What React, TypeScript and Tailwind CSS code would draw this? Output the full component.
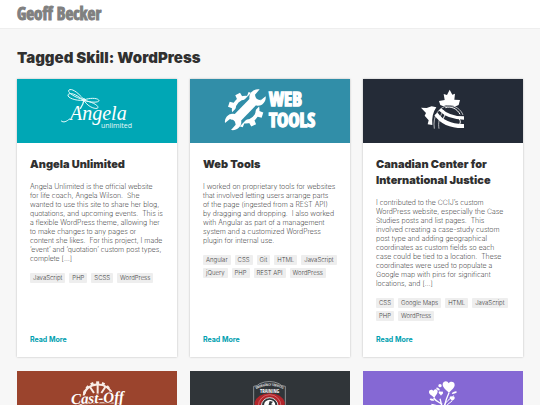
import type { ReactNode } from "react";

const narrow = "'Liberation Sans Narrow', 'Open Sans Condensed', 'DejaVu Sans Condensed', sans-serif";

function Banner({ className, label, children }: { className: string; label: string; children: ReactNode }) {
  return (
    <svg viewBox="0 0 160 64" role="img" aria-label={label} className={`block w-full ${className}`}>
      {children}
    </svg>
  );
}

function AngelaLogo() {
  return (
    <Banner className="bg-[#00a7b5]" label="Angela Unlimited">
      <g transform="translate(-7 -4) scale(.33333)" fill="none" stroke="#e6fafa" strokeWidth="3" strokeLinecap="round">
        <path d="M222 74C200 48 184 40 177 45s14 22 45 29z" />
        <path d="M220 76C196 54 176 52 174 60s22 18 46 16z" />
        <path d="M224 74c14-5 36-6 42 1s-20 10-42 1z" />
        <path d="M224 77c16 2 40 12 40 20s-28 2-40-18z" />
        <circle cx="222" cy="75" r="4" fill="#e6fafa" />
        <path d="M221 78c-1 10-6 16-10 22" strokeWidth="4" />
        <path d="M154 138c6 6 16 2 24-6" />
      </g>
      <text x="53" y="41" fill="#fff" fontSize="20" fontStyle="italic" fontFamily="'Liberation Serif', serif">
        Angela
      </text>
      <text x="84" y="49" fill="#e6fafa" fontSize="7" fontFamily="'Open Sans', sans-serif">
        unlimited
      </text>
    </Banner>
  );
}

function WebToolsLogo() {
  const teeth = [0, 45, 90, 135, 180, 225, 270, 315];
  return (
    <Banner className="bg-[#318ea8]" label="Web Tools">
      <g transform="translate(-5 -4) scale(.33333)">
        <circle cx="182" cy="104" r="36" fill="none" stroke="#fff" strokeWidth="11" />
        {teeth.map((a) => (
          <path key={a} d="M173 66l1-15h16l1 15z" fill="#fff" transform={`rotate(${a + 18} 182 104)`} />
        ))}
        <path d="M146 140L218 66" stroke="#318ea8" strokeWidth="46" />
        <path d="M148 138L214 70" stroke="#fff" strokeWidth="27" />
        <path
          d="M224 43c-16-3-31 9-31 24 0 14 12 26 26 25 14 0 25-13 23-28l-15 12-14-4-3-13z"
          fill="#fff"
        />
        <path
          d="M138 165c16 3 31-9 31-24 0-14-12-26-26-25-14 0-25 13-23 28l15-12 14 4 3 13z"
          fill="#fff"
        />
      </g>
      <g fill="#fff" stroke="#fff" strokeWidth="1.4" fontSize="19" fontWeight="700" fontFamily={narrow}>
        <text x="79" y="27">WEB</text>
        <text x="79" y="48">TOOLS</text>
      </g>
    </Banner>
  );
}

function JusticeLogo() {
  return (
    <Banner className="bg-[#242b37]" label="Canadian Center for International Justice">
      <g transform="translate(-5 -4) scale(.33333)">
        <path
          d="M275 44l8 15 8-3-2 18 17 1-4 15-12 5c-10-6-22-6-34-1l-9-4-4-12 17-3-3-18 10 3z"
          fill="#fff"
        />
        <path d="M189 98l17 1 15-5 14 3c-10 14-14 32-12 53l-14-2 3-12-12-14 4-8z" fill="#fff" />
        <g fill="none" stroke="#fff">
          <path d="M229 161c-6-38 14-66 42-69 22-1 38 12 44 28" strokeWidth="2" />
          <path d="M243 161c-3-16 0-34 14-55" strokeWidth="2" />
          <path d="M262 98c18-6 36 4 44 20M264 116c-8 10-10 20-10 26M304 132c4 6 4 12 0 16" strokeWidth="3" />
          <path d="M246 103c18 18 42 26 72 26" strokeWidth="10" />
          <path d="M234 117c18 26 46 37 84 36" strokeWidth="12" />
        </g>
      </g>
    </Banner>
  );
}

function CastOffLogo() {
  const spokes = [-72, -48, -24, 0, 24, 48, 72];
  return (
    <Banner className="bg-[#9b442d]" label="Cast-Off">
      <g transform="translate(-7 -46) scale(.33333)" fill="none" stroke="#f8ece6">
        <path d="M221 212a43 37 0 0 1 85-4" strokeWidth="6" />
        {spokes.map((a) => (
          <path key={a} d="M263 177v-8" strokeWidth="9" transform={`rotate(${a} 263 214)`} />
        ))}
        <path d="M263 176v34M240 186l12 18M286 186l-12 18" strokeWidth="6" />
        <path d="M190 242q72-14 145-6" strokeWidth="3" />
      </g>
      <text
        x="54"
        y="32"
        fill="#fff"
        stroke="#9b442d"
        strokeWidth="2"
        paintOrder="stroke"
        fontSize="15"
        fontWeight="700"
        fontStyle="italic"
        fontFamily="'Liberation Serif', serif"
        transform="rotate(-3 80 30)"
      >
        Cast-Off
      </text>
    </Banner>
  );
}

function TrainingLogo() {
  return (
    <Banner className="bg-[#303539]" label="Emergency Services Training">
      <g transform="translate(-5 -46) scale(.33333)">
        <path
          d="M206 184q12-1 18-8 29-13 58 0 6 7 19 8v100q-48 40-95 0z"
          fill="#303539"
          stroke="#b9bcbe"
          strokeWidth="2"
        />
        <path d="M209 232q8-25 45-27 37 2 45 27v60h-90z" fill="#b3242a" />
        <circle cx="254" cy="243" r="34" fill="none" stroke="#d98a8c" strokeWidth="2" />
        <circle cx="254" cy="243" r="25" fill="#303539" stroke="#d8dadb" strokeWidth="3" />
        <circle cx="254" cy="241" r="17" fill="#fff" />
        <path d="M250 252l-6-12 6 2 4-14 10 2-6 8 6 2-12 4z" fill="#303539" />
        <path id="training-arc" d="M212 193q42-22 84 0" fill="none" />
        <text fill="#e4e5e6" fontSize="10" fontWeight="700" fontFamily={narrow}>
          <textPath href="#training-arc" startOffset="50%" textAnchor="middle">
            EMERGENCY SERVICES
          </textPath>
        </text>
        <text x="254" y="203" textAnchor="middle" fill="#fff" fontSize="15" fontWeight="700" fontFamily={narrow}>
          TRAINING
        </text>
      </g>
    </Banner>
  );
}

function HeartTreeLogo() {
  return (
    <Banner className="bg-[#8568d4]" label="Tree of hearts">
      <g transform="translate(-5 -26) scale(.33333)" fill="#fff">
        <path d="M273 144c-8-10-20-16-19-27 2-10 15-11 18-2 6-8 18-5 18 5 0 9-10 14-17 24z" />
        <path d="M229 159c-6-8-17-11-16-19 1-7 10-8 13-2 3-8 13-7 13 1 0 7-6 12-10 20z" />
        <path d="M282 168c-3-5-8-6-7-11 2-4 7-4 8 0 3-4 8-2 7 3 0 4-5 5-8 8z" />
        <path d="M249 152c-3-5-8-6-7-10 1-4 6-4 7-1 3-3 7-1 6 3 0 3-4 4-6 8z" />
        <circle cx="246" cy="122" r="5" />
        <ellipse cx="240" cy="132" rx="6" ry="3" transform="rotate(35 240 132)" />
        <ellipse cx="289" cy="143" rx="8" ry="3" transform="rotate(-20 289 143)" />
        <ellipse cx="222" cy="164" rx="7" ry="3" transform="rotate(15 222 164)" />
        <g fill="none" stroke="#fff" strokeWidth="4">
          <path d="M251 225c2-30 2-46-5-64M257 225c0-40 4-56 16-82M253 178c-10-6-18-8-26-19" />
          <path d="M258 182c6-12 16-20 30-30M256 190c8-8 16-14 26-22M252 190c-10-8-20-10-32-12" strokeWidth="3" />
        </g>
      </g>
    </Banner>
  );
}

function Card({ logo, title, text, tags }: { logo: ReactNode; title: string; text: string; tags: string[] }) {
  return (
    <article className="flex flex-col bg-white shadow-[0_0_2px_rgba(0,0,0,0.25)]">
      {logo}
      <div className="flex grow flex-col pt-[13px] pr-3 pb-3 pl-[13px]">
        <h2 className="text-[11px] leading-[16px] font-black text-[#303030]">{title}</h2>
        <p className="mt-[10px] text-[7px] leading-[9px] font-extralight text-black">{text}</p>
        <ul className="mt-[10px] mb-[14px] flex flex-wrap gap-x-1 gap-y-[3px]">
          {tags.map((tag) => (
            <li key={tag} className="rounded-[1px] bg-[#eee] px-[3px] text-[6px] leading-[10px] font-light text-[#444]">
              {tag}
            </li>
          ))}
        </ul>
        <a href="#" className="mt-auto self-start text-[7px] leading-[10px] font-bold text-[#00a0af]">
          Read More
        </a>
      </div>
    </article>
  );
}

export default function App() {
  return (
    <div className="min-h-screen bg-[#f7f7f7] font-['Inter',sans-serif]">
      <header className="flex h-[29px] items-center border-b border-[#eee] bg-white px-[17px]">
        <a
          href="#"
          className="font-['Liberation_Sans_Narrow','Open_Sans_Condensed','DejaVu_Sans_Condensed',sans-serif] text-[17px] leading-[20px] font-bold text-[#808080] [-webkit-text-stroke:1px_#808080]"
        >
          Geoff Becker
        </a>
      </header>
      <main className="px-[17px] pt-[19px]">
        <h1 className="text-[15px] leading-[20px] font-black text-[#303030]">Tagged Skill: WordPress</h1>
        <div className="mt-[11px] grid grid-cols-3 gap-x-[13px] gap-y-[14px]">
          <Card
            logo={<AngelaLogo />}
            title="Angela Unlimited"
            text={
              "Angela Unlimited is the official website for\u00a0life coach, Angela Wilson.\u00a0 She wanted\u00a0to use this site to share her blog, quotations, and upcoming events.\u00a0 This is a\u00a0flexible WordPress theme, allowing her to\u00a0make changes to any pages or content\u00a0she likes.\u00a0 For this project, I made ‘event’ and ‘quotation’ custom post types, complete\u00a0[…]"
            }
            tags={["JavaScript", "PHP", "SCSS", "WordPress"]}
          />
          <Card
            logo={<WebToolsLogo />}
            title="Web Tools"
            text={
              "I worked on proprietary tools for websites that involved letting users arrange parts of\u00a0the page (ingested from a REST API) by\u00a0dragging and dropping.\u00a0 I also worked with Angular as part of a management system and a customized WordPress plugin for internal use."
            }
            tags={["Angular", "CSS", "Git", "HTML", "JavaScript", "jQuery", "PHP", "REST API", "WordPress"]}
          />
          <Card
            logo={<JusticeLogo />}
            title="Canadian Center for International Justice"
            text={
              "I contributed to the CCIJ’s custom WordPress website, especially the Case Studies posts and list pages.\u00a0 This involved creating a case-study custom post type and adding geographical coordinates as custom fields so each case\u00a0could be tied to a location.\u00a0 These coordinates were used to populate a Google map with pins for significant locations, and […]"
            }
            tags={["CSS", "Google Maps", "HTML", "JavaScript", "PHP", "WordPress"]}
          />
          <CastOffLogo />
          <TrainingLogo />
          <HeartTreeLogo />
        </div>
      </main>
    </div>
  );
}
